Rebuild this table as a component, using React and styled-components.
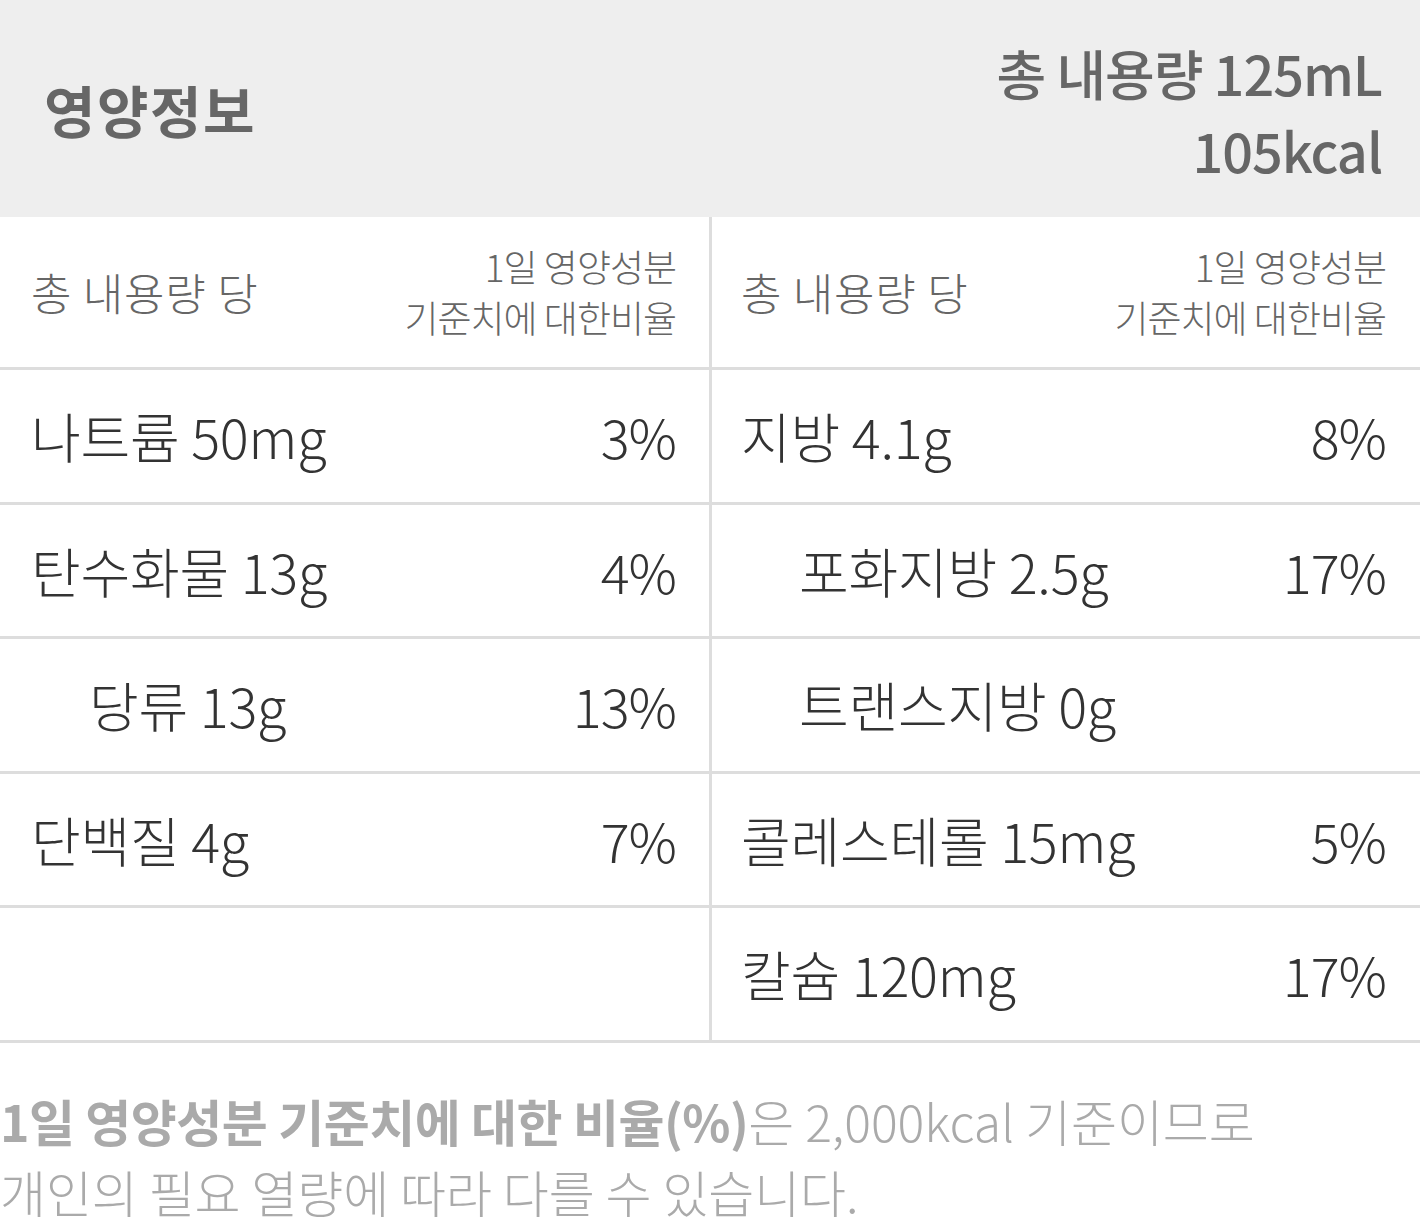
import React from 'react';
import styled, { createGlobalStyle } from 'styled-components';

const GlobalStyle = createGlobalStyle`
  html, body {
    margin: 0;
    padding: 0;
    background: #fff;
  }
  body {
    font-family: 'Noto Sans CJK KR', 'Noto Sans', sans-serif;
    -webkit-font-smoothing: antialiased;
  }
`;

const Page = styled.div`
  width: 1420px;
`;

const Top = styled.div`
  display: flex;
  justify-content: space-between;
  align-items: center;
  height: 217px;
  padding: 0 38px 0 44px;
  box-sizing: border-box;
  background: #eee;
  color: #666;
`;

const Title = styled.h2`
  margin: 0;
  font-size: 56px;
  font-weight: 700;
  letter-spacing: 1.5px;
  line-height: 1;
`;

const Total = styled.div`
  font-size: 54px;
  font-weight: 500;
  letter-spacing: -1px;
  line-height: 77px;
  text-align: right;
  padding-top: 4px;
`;

const Table = styled.div`
  display: grid;
  grid-template-columns: 709px 1fr;
  border-bottom: 3px solid #ddd;
`;

const Cell = styled.div`
  display: flex;
  justify-content: space-between;
  align-items: center;
  box-sizing: border-box;
  height: ${(p) => (p.head ? '150px' : '134.5px')};
  padding: 0 ${(p) => (p.right ? '34px' : '33px')} 0 ${(p) => (p.right ? '29px' : '31px')};
  border-left: ${(p) => (p.right ? '3px solid #ddd' : 'none')};
  border-top: ${(p) => (p.first ? 'none' : '3px solid #ddd')};
  font-weight: 300;
  color: #333;
`;

const HeadLabel = styled.span`
  font-size: 44px;
  letter-spacing: 0.8px;
  color: #666;
`;

const HeadRate = styled.span`
  font-size: 37px;
  line-height: 51px;
  letter-spacing: -1px;
  color: #666;
  text-align: right;
`;

const Name = styled.span`
  font-size: 54px;
  letter-spacing: -0.2px;
  padding-left: ${(p) => (p.sub ? '58px' : '0')};
`;

const Rate = styled.span`
  font-size: 54px;
  letter-spacing: -1px;
`;

const Note = styled.p`
  margin: 0;
  padding: 42px 0 0 0;
  font-size: 50px;
  font-weight: 300;
  line-height: 71px;
  letter-spacing: -0.1px;
  color: #aaa;
`;

const Strong = styled.b`
  font-weight: 700;
  letter-spacing: -0.5px;
`;

const left = [
  { name: '나트륨 50mg', rate: '3%' },
  { name: '탄수화물 13g', rate: '4%' },
  { name: '당류 13g', rate: '13%', sub: true },
  { name: '단백질 4g', rate: '7%' },
  null,
];

const right = [
  { name: '지방 4.1g', rate: '8%' },
  { name: '포화지방 2.5g', rate: '17%', sub: true },
  { name: '트랜스지방 0g', rate: '', sub: true },
  { name: '콜레스테롤 15mg', rate: '5%' },
  { name: '칼슘 120mg', rate: '17%' },
];

export default function App() {
  const rows = [];
  left.forEach((item, i) => {
    const r = right[i];
    rows.push(
      <Cell key={`l${i}`}>
        {item && <Name sub={item.sub}>{item.name}</Name>}
        {item && <Rate>{item.rate}</Rate>}
      </Cell>,
      <Cell key={`r${i}`} right>
        <Name sub={r.sub}>{r.name}</Name>
        <Rate>{r.rate}</Rate>
      </Cell>
    );
  });

  return (
    <Page>
      <GlobalStyle />
      <Top>
        <Title>영양정보</Title>
        <Total>
          총 내용량 125mL
          <br />
          105kcal
        </Total>
      </Top>
      <Table>
        <Cell head first>
          <HeadLabel>총 내용량 당</HeadLabel>
          <HeadRate>
            1일 영양성분
            <br />
            기준치에 대한비율
          </HeadRate>
        </Cell>
        <Cell head first right>
          <HeadLabel>총 내용량 당</HeadLabel>
          <HeadRate>
            1일 영양성분
            <br />
            기준치에 대한비율
          </HeadRate>
        </Cell>
        {rows}
      </Table>
      <Note>
        <Strong>1일 영양성분 기준치에 대한 비율(%)</Strong>은 2,000kcal 기준이므로
        <br />
        개인의 필요 열량에 따라 다를 수 있습니다.
      </Note>
    </Page>
  );
}
